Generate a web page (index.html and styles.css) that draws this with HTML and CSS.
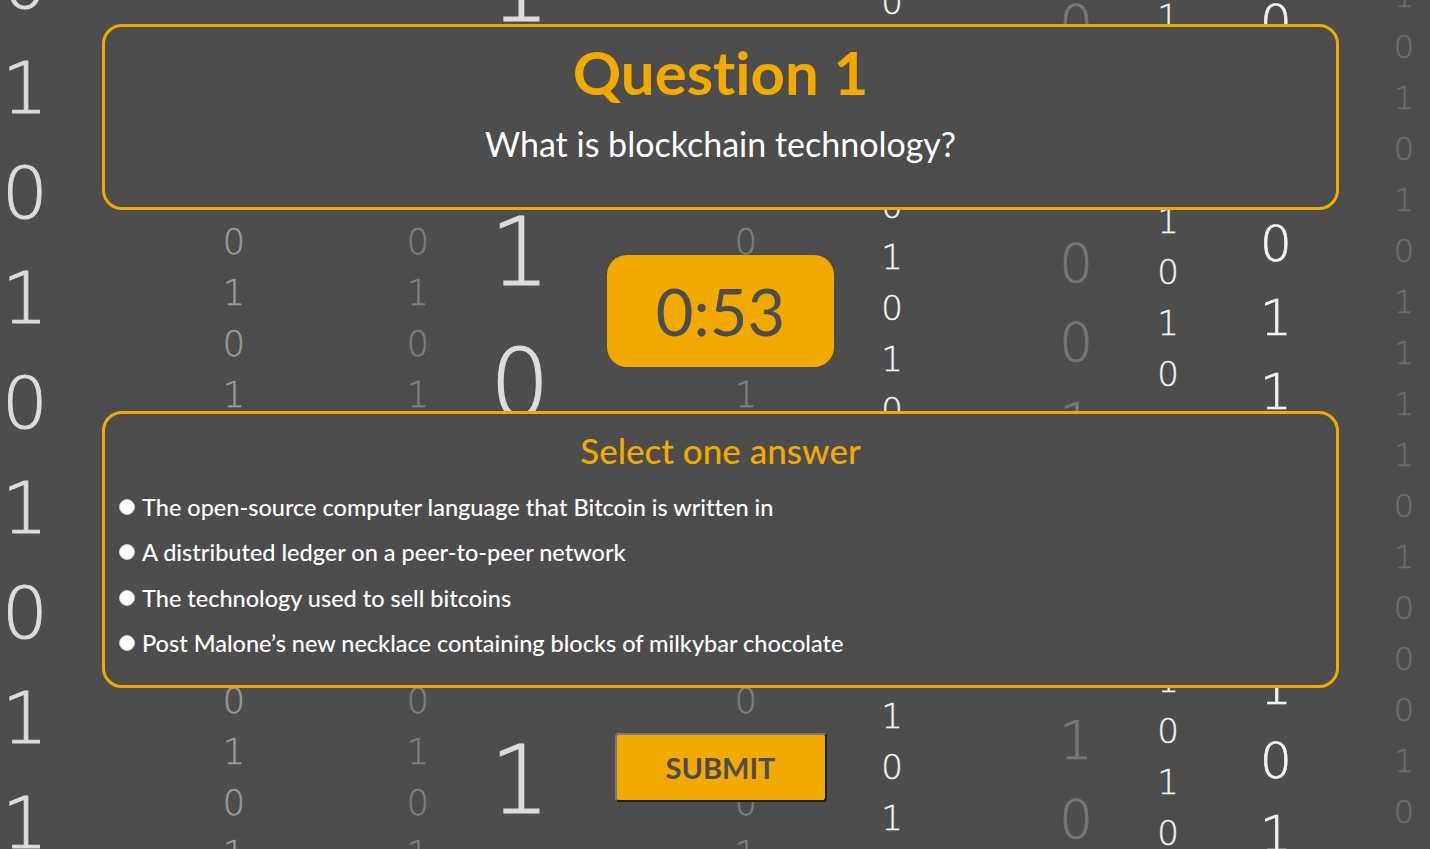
FILE: index.html
```html
<!DOCTYPE html>
<html lang="en">
<head>
<meta charset="utf-8">
<title>Quiz - Question 1</title>
<link rel="stylesheet" href="styles.css">
</head>
<body>
<div class="matrix" aria-hidden="true">
  <div class="col c1">0<br>1<br>0<br>1<br>0<br>1<br>0<br>1<br>1</div>
  <div class="col c2">1<br>0<br>1<br>0<br>1<br>0<br>1<br>0<br>1<br>0<br>1<br>0<br>1<br>0<br>0<br>1<br>0<br>1</div>
  <div class="col c3">1<br>0<br>1<br>0<br>1<br>0<br>1<br>0<br>1<br>0<br>1<br>0<br>1<br>0<br>0<br>1<br>0<br>1</div>
  <div class="col c4">1<br>0<br>1<br>0<br>1<br>0<br>1<br>0</div>
  <div class="col c5">1<br>0<br>1<br>0<br>1<br>0<br>1<br>0<br>1<br>0<br>1<br>0<br>1<br>0<br>0<br>1<br>0<br>1</div>
  <div class="col c6">0<br>1<br>0<br>1<br>0<br>1<br>0<br>1<br>0<br>1<br>0<br>1<br>0<br>0<br>1<br>0<br>1</div>
  <div class="col c7">0<br>1<br>0<br>0<br>0<br>1<br>0<br>1<br>0<br>1<br>0</div>
  <div class="col c8">1<br>0<br>1<br>0<br>1<br>0<br>1<br>0<br>1<br>0<br>1<br>0<br>1<br>1<br>0<br>1<br>0</div>
  <div class="col c9">0<br>1<br>1<br>0<br>1<br>1<br>0<br>1<br>0<br>1<br>0<br>1</div>
  <div class="col c10">1<br>0<br>1<br>0<br>1<br>0<br>1<br>1<br>1<br>1<br>0<br>1<br>0<br>0<br>0<br>1<br>0</div>
</div>

<main class="quiz">
  <section class="card question-card">
    <h1 class="q-title">Question 1</h1>
    <p class="q-text">What is blockchain technology?</p>
  </section>

  <div class="timer">0:53</div>

  <section class="card answers">
    <h2 class="answers-title">Select one answer</h2>
    <ul class="options">
      <li class="option"><span class="radio"></span>The open-source computer language that Bitcoin is written in</li>
      <li class="option"><span class="radio"></span>A distributed ledger on a peer-to-peer network</li>
      <li class="option"><span class="radio"></span>The technology used to sell bitcoins</li>
      <li class="option"><span class="radio"></span>Post Malone’s new necklace containing blocks of milkybar chocolate</li>
    </ul>
  </section>

  <button class="submit" type="button">SUBMIT</button>
</main>
</body>
</html>
```

FILE: styles.css
```css
html, body {
  margin: 0;
  padding: 0;
}

body {
  width: 1430px;
  height: 849px;
  overflow: hidden;
  background: #4d4d4d;
  color: #ffffff;
  font-family: "Lato", "Open Sans", sans-serif;
  font-variant-ligatures: none;
  position: relative;
}

/* ---------- binary background ---------- */
.matrix {
  position: absolute;
  inset: 0;
  overflow: hidden;
  z-index: 0;
}

.col {
  position: absolute;
  width: 100px;
  text-align: center;
  font-family: "DejaVu Sans", sans-serif;
  font-weight: 200;
  -webkit-text-stroke: 0.4px currentColor;
}

.c1  { left: -25px;  top: -69.5px;  font-size: 72px; line-height: 105px;  color: #dcdcdc; -webkit-text-stroke-width: 1px; }
.c2  { left: 184px;  top: -38.5px;  font-size: 35px; line-height: 51px;   color: #9a9a9a; }
.c3  { left: 368px;  top: -38.5px;  font-size: 35px; line-height: 51px;   color: #7e7e7e; }
.c4  { left: 470px;  top: -77px;    font-size: 94px; line-height: 132px;  color: #dcdcdc; -webkit-text-stroke-width: 1.2px; }
.c5  { left: 696px;  top: -38.5px;  font-size: 35px; line-height: 51px;   color: #7e7e7e; }
.c6  { left: 842px;  top: -23.5px;  font-size: 34px; line-height: 51px;   color: #f2f2f2; }
.c7  { left: 1026px; top: -14.75px; font-size: 53px; line-height: 79.5px; color: #767676; -webkit-text-stroke-width: 0.7px; }
.c8  { left: 1118px; top: -8.5px;   font-size: 34px; line-height: 51px;   color: #f2f2f2; }
.c9  { left: 1226px; top: -13.3px;  font-size: 50px; line-height: 73.8px; color: #f2f2f2; -webkit-text-stroke-width: 0.7px; }
.c10 { left: 1354px; top: -29.5px;  font-size: 32px; line-height: 51px;   color: #6c6c6c; }

/* ---------- quiz ---------- */
.quiz {
  position: relative;
  z-index: 1;
  width: 1237px;
  margin-left: 102px;
  padding-top: 24px;
  display: flex;
  flex-direction: column;
  align-items: center;
}

.card {
  box-sizing: border-box;
  width: 100%;
  background: #4d4d4d;
  border: 3px solid #f2a900;
  border-radius: 20px;
  text-align: center;
}

.question-card {
  height: 186px;
  padding-top: 15px;
}

.q-title {
  margin: 0;
  font-size: 60px;
  line-height: 60px;
  font-weight: 700;
  color: #f2a900;
}

.q-text {
  margin: 22px 0 0;
  font-size: 34px;
  line-height: 40px;
  font-weight: 400;
  color: #ffffff;
}

.timer {
  margin-top: 45px;
  width: 227px;
  height: 112px;
  border-radius: 20px;
  background: #f2a900;
  color: #4d4d4d;
  display: flex;
  align-items: center;
  justify-content: center;
  font-size: 65px;
  font-weight: 400;
}

.answers {
  margin-top: 44px;
  height: 277px;
  padding: 16px 14px 0;
}

.answers-title {
  margin: 0;
  font-size: 35px;
  line-height: 40px;
  font-weight: 500;
  color: #f2a900;
}

.options {
  list-style: none;
  margin: 14px 0 0;
  padding: 0;
  text-align: left;
}

.option {
  display: flex;
  align-items: center;
  height: 45.5px;
  font-size: 23.5px;
  font-weight: 500;
  color: #ffffff;
}

.radio {
  flex: none;
  box-sizing: border-box;
  width: 16px;
  height: 16px;
  margin-right: 7px;
  border-radius: 50%;
  background: #ffffff;
  border: 1px solid #c8c8c8;
}

.submit {
  margin-top: 45px;
  box-sizing: border-box;
  width: 212px;
  height: 69px;
  background: #f2a900;
  border: 2px solid;
  border-color: #7a7a7a #1e1e1e #1e1e1e #7a7a7a;
  border-radius: 4px;
  color: #4d4d4d;
  font-family: "Lato", "Open Sans", sans-serif;
  font-size: 29px;
  font-weight: 700;
  padding: 0;
  cursor: pointer;
}
```
